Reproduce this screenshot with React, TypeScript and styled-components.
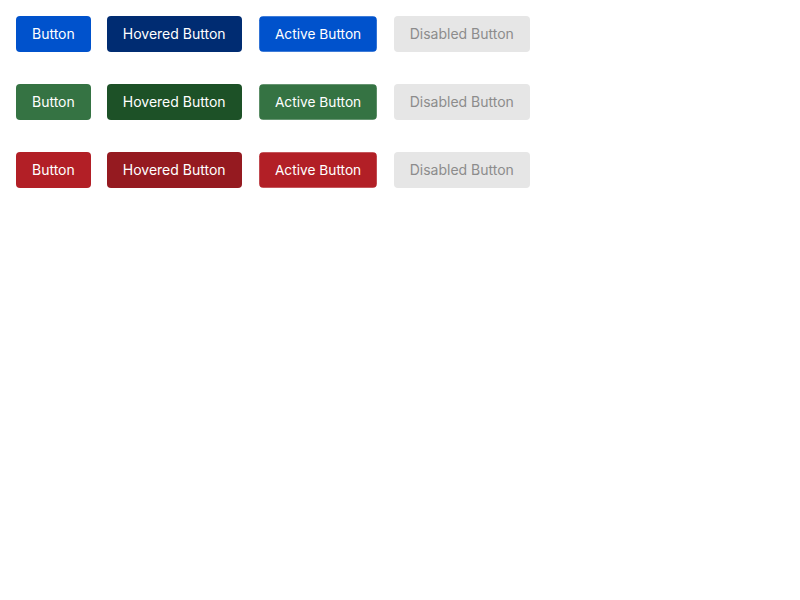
import React, { FC } from 'react';
import styled, { createGlobalStyle, css } from 'styled-components';

type Tone = 'blue' | 'green' | 'red';
type State = 'normal' | 'hovered' | 'active' | 'disabled';

const palette: Record<Tone, { base: string; hover: string }> = {
  blue: { base: '#0052cc', hover: '#002c72' },
  green: { base: '#357343', hover: '#1d5127' },
  red: { base: '#b21f26', hover: '#951a20' }
};

const labels: Record<State, string> = {
  normal: 'Button',
  hovered: 'Hovered Button',
  active: 'Active Button',
  disabled: 'Disabled Button'
};

const GlobalStyle = createGlobalStyle`
  body {
    margin: 0;
    background: #ffffff;
    font-family: Inter, "Noto Sans", sans-serif;
  }
`;

const App: FC = () => (
  <>
    <GlobalStyle />
    <SPage>
      {(['blue', 'green', 'red'] as Tone[]).map((tone) => (
        <SRow key={tone}>
          {(['normal', 'hovered', 'active', 'disabled'] as State[]).map((state) => (
            <SButton key={state} $tone={tone} $state={state} disabled={state === 'disabled'}>
              {labels[state]}
            </SButton>
          ))}
        </SRow>
      ))}
    </SPage>
  </>
);

export default App;

const SPage = styled.div`
  display: flex;
  flex-direction: column;
  gap: 32px;
  padding: 16px;
`;

const SRow = styled.div`
  display: flex;
  gap: 16px;
`;

const SButton = styled.button<{ $tone: Tone; $state: State }>`
  height: 36px;
  padding: 0 16px;
  border: none;
  border-radius: 4px;
  font-family: Inter, "Noto Sans", sans-serif;
  font-size: 14px;
  line-height: 36px;
  color: #ffffff;
  cursor: pointer;
  background: ${({ $tone }) => palette[$tone].base};

  ${({ $state, $tone }) =>
    $state === 'hovered' &&
    css`
      background: ${palette[$tone].hover};
    `}

  ${({ $state }) =>
    $state === 'active' &&
    css`
      transform: scale(0.98);
    `}

  ${({ $state }) =>
    $state === 'disabled' &&
    css`
      background: #e6e6e6;
      color: #8c8c8c;
      cursor: not-allowed;
    `}
`;
